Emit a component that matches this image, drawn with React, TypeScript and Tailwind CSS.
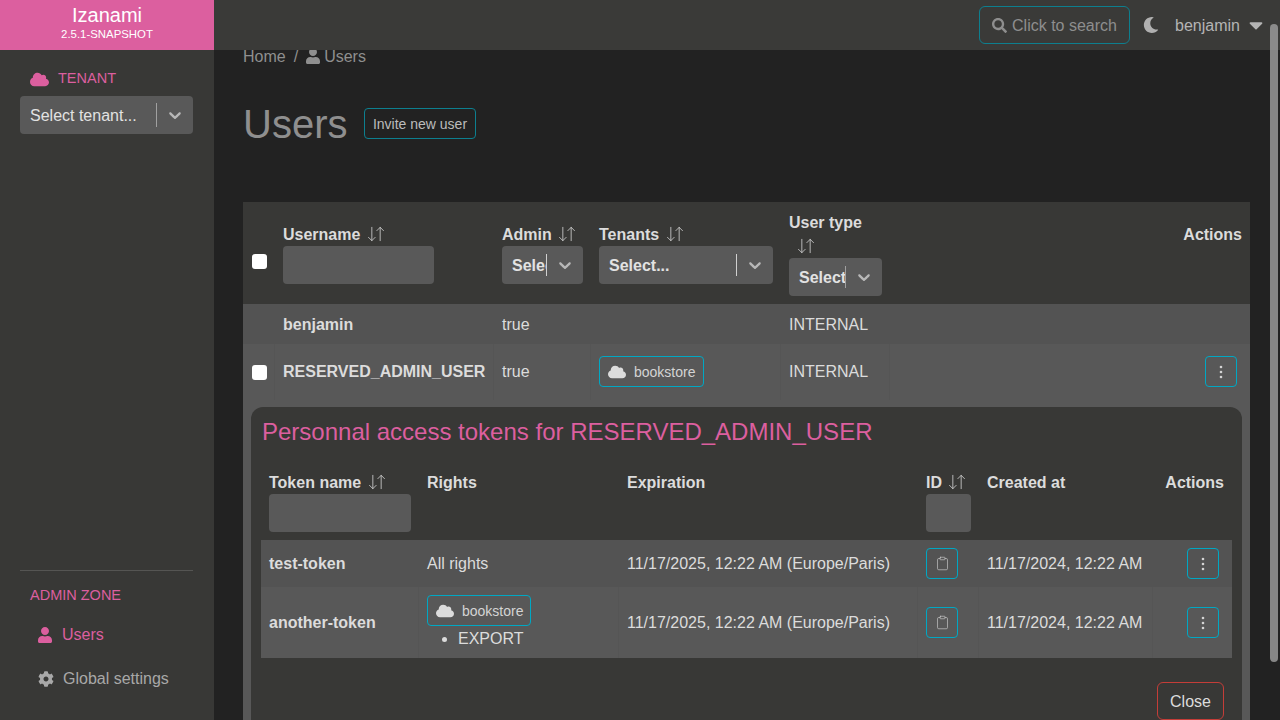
import { ArrowDownUp, Clipboard } from "lucide-react";
import {
  FaCaretDown,
  FaCloud,
  FaCog,
  FaMoon,
  FaSearch,
  FaUser,
} from "react-icons/fa";

const Chevron = () => (
  <svg viewBox="0 0 20 20" className="w-5 h-5 fill-[#b8b8b8] shrink-0">
    <path d="M4.516 7.548c0.436-0.446 1.043-0.481 1.576 0l3.908 3.747 3.908-3.747c0.533-0.481 1.141-0.446 1.574 0 0.436 0.445 0.408 1.197 0 1.615-0.406 0.418-4.695 4.502-4.695 4.502-0.217 0.223-0.502 0.335-0.787 0.335s-0.57-0.112-0.789-0.335c0 0-4.287-4.084-4.695-4.502s-0.436-1.17 0-1.615z" />
  </svg>
);

const Kebab = () => (
  <svg viewBox="0 0 12 14" className="w-3 h-[14px] fill-[#d4d4d4]">
    <circle cx="6" cy="2" r="1.3" />
    <circle cx="6" cy="7" r="1.3" />
    <circle cx="6" cy="12" r="1.3" />
  </svg>
);

const SortIcon = () => (
  <ArrowDownUp size={20} strokeWidth={1} className="inline-block text-[#d0d0d0] ml-px align-[-4px]" />
);

const Select = ({
  label,
  width,
  separator,
}: {
  label: string;
  width: string;
  separator: string;
}) => (
  <div className={`${width} h-[38px] rounded bg-[#595959] flex items-center font-bold`}>
    <div className="flex-1 min-w-0 pl-[10px] pt-[2px] overflow-hidden whitespace-nowrap text-[#e2e2e2]">
      {label}
    </div>
    <div className={`w-px h-[22px] ${separator}`} />
    <div className="w-[36px] flex justify-center">
      <Chevron />
    </div>
  </div>
);

const TenantTag = ({ width }: { width: string }) => (
  <div className={`${width} h-[31px] rounded border border-[#00a8c4] flex items-center pl-2 text-sm text-[#d4d4d4] font-normal`}>
    <FaCloud size={18} className="text-[#dcdcdc]" />
    <span className="ml-2">bookstore</span>
  </div>
);

const IconButton = ({ children }: { children: React.ReactNode }) => (
  <div className="w-[32px] h-[31px] rounded border border-[#00a8c4] flex items-center justify-center text-[#d0d0d0]">
    {children}
  </div>
);

const Sidebar = () => (
  <aside className="w-[214px] shrink-0 bg-[#383836] flex flex-col justify-between pl-5 pr-[21px] pt-[19px] pb-[31px]">
    <div>
      <div className="flex items-center gap-[9px] pl-[10px] h-5 text-[#dc5f9f] text-[14.5px]">
        <FaCloud size={19} />
        <span>TENANT</span>
      </div>
      <div className="mt-[7px] h-[38px] rounded bg-[#595959] flex items-center text-[#e2e2e2]">
        <div className="flex-1 pl-[10px] pt-[2px] whitespace-nowrap">Select tenant...</div>
        <div className="w-px h-[24px] bg-[#a0a0a0]" />
        <div className="w-[36px] flex justify-center">
          <Chevron />
        </div>
      </div>
    </div>
    <div className="border-t border-[#555553] pt-[14px]">
      <div className="pl-[10px] text-[14.5px] leading-5 text-[#dc5f9f]">ADMIN ZONE</div>
      <div className="mt-[20px] pl-[17px] h-5 flex items-center gap-[9px] text-[#dc5f9f]">
        <FaUser size={16} />
        <span>Users</span>
      </div>
      <div className="mt-[24px] pl-[18px] h-5 flex items-center gap-[9px] text-[#a8a8a8]">
        <FaCog size={16} />
        <span>Global settings</span>
      </div>
    </div>
  </aside>
);

const cellLine = "shadow-[inset_-1px_0_0_#555555]";

const TokenPanel = () => (
  <div className="ml-2 mr-2 mt-[7px] rounded-t-xl bg-[#383836] px-[10px] pt-[9px] pb-4">
    <h2 className="text-2xl leading-8 text-[#dc5f9f] pl-px">
      Personnal access tokens for RESERVED_ADMIN_USER
    </h2>
    <table className="table-fixed w-[971px] mt-[14px] text-[#dcdcdc]">
      <colgroup>
        <col className="w-[158px]" />
        <col className="w-[200px]" />
        <col className="w-[299px]" />
        <col className="w-[61px]" />
        <col className="w-[174px]" />
        <col />
      </colgroup>
      <thead>
        <tr className="h-[78px] text-left">
          <th className="px-2 py-2 align-top">
            <div className="h-6 leading-[26px] whitespace-nowrap">
              Token name <SortIcon />
            </div>
            <div className="w-[142px] h-[38px] rounded bg-[#595959]" />
          </th>
          <th className="px-2 py-2 align-top h-6 leading-[26px]">Rights</th>
          <th className="px-2 py-2 align-top h-6 leading-[26px]">Expiration</th>
          <th className="px-2 py-2 align-top">
            <div className="h-6 leading-[26px] whitespace-nowrap">
              ID <SortIcon />
            </div>
            <div className="w-[45px] h-[38px] rounded bg-[#595959]" />
          </th>
          <th className="px-2 py-2 align-top h-6 leading-[26px]">Created at</th>
          <th className="px-2 py-2 align-top h-6 leading-[26px] text-right">Actions</th>
        </tr>
      </thead>
      <tbody>
        <tr className="h-[47px] bg-[#535353]">
          <td className="px-2 font-bold">test-token</td>
          <td className="px-2">All rights</td>
          <td className="px-2 whitespace-nowrap">11/17/2025, 12:22 AM (Europe/Paris)</td>
          <td className="px-2">
            <IconButton>
              <Clipboard size={15} strokeWidth={1} />
            </IconButton>
          </td>
          <td className="px-2 whitespace-nowrap">11/17/2024, 12:22 AM</td>
          <td className="pr-[13px]">
            <div className="flex justify-end">
              <IconButton>
                <Kebab />
              </IconButton>
            </div>
          </td>
        </tr>
        <tr className="h-[71px] bg-[#585858]">
          <td className={`px-2 font-bold ${cellLine}`}>another-token</td>
          <td className={`px-2 pb-px ${cellLine}`}>
            <TenantTag width="w-[104px]" />
            <ul className="list-disc pl-[31px] leading-[20px] mt-[3px]">
              <li>EXPORT</li>
            </ul>
          </td>
          <td className={`px-2 whitespace-nowrap ${cellLine}`}>
            11/17/2025, 12:22 AM (Europe/Paris)
          </td>
          <td className={`px-2 ${cellLine}`}>
            <IconButton>
              <Clipboard size={15} strokeWidth={1} />
            </IconButton>
          </td>
          <td className={`px-2 whitespace-nowrap ${cellLine}`}>11/17/2024, 12:22 AM</td>
          <td className="pr-[13px]">
            <div className="flex justify-end">
              <IconButton>
                <Kebab />
              </IconButton>
            </div>
          </td>
        </tr>
      </tbody>
    </table>
    <div className="flex justify-end mt-6 pr-2">
      <div className="w-[67px] h-[38px] pt-px rounded-md border border-[#c43d38] flex items-center justify-center text-[#dcdcdc]">
        Close
      </div>
    </div>
  </div>
);

const UsersTable = () => (
  <table className="table-fixed w-[1007px] mt-[54px] text-[#dcdcdc]">
    <colgroup>
      <col className="w-[32px]" />
      <col className="w-[219px]" />
      <col className="w-[97px]" />
      <col className="w-[190px]" />
      <col className="w-[109px]" />
      <col />
    </colgroup>
    <thead>
      <tr className="h-[102px] bg-[#383836] text-left">
        <th className="pl-[9px]">
          <input type="checkbox" className="appearance-none block w-[15px] h-[15px] mt-4 bg-white rounded-[3px]" />
        </th>
        <th className="px-2">
          <div className="h-6 leading-[26px] whitespace-nowrap">
            Username <SortIcon />
          </div>
          <div className="w-[151px] h-[38px] rounded bg-[#595959]" />
        </th>
        <th className="px-2">
          <div className="h-6 leading-[26px] whitespace-nowrap">
            Admin <SortIcon />
          </div>
          <Select label="Select..." width="w-[81px]" separator="bg-[#d0d0d0]" />
        </th>
        <th className="px-2">
          <div className="h-6 leading-[26px] whitespace-nowrap">
            Tenants <SortIcon />
          </div>
          <Select label="Select..." width="w-[174px]" separator="bg-[#d0d0d0]" />
        </th>
        <th className="px-2">
          <div className="h-6 leading-[26px] whitespace-nowrap">User type</div>
          <div className="h-6 leading-[26px] pl-[6px]">
            <SortIcon />
          </div>
          <Select label="Select..." width="w-[93px]" separator="bg-[#a0a0a0]" />
        </th>
        <th className="pr-2 text-right pb-[36px]">Actions</th>
      </tr>
    </thead>
    <tbody>
      <tr className="h-[40px] bg-[#535353]">
        <td />
        <td className="px-2 pt-[2px] font-bold">benjamin</td>
        <td className="px-2 pt-[2px]">true</td>
        <td />
        <td className="px-2 pt-[2px]">INTERNAL</td>
        <td />
      </tr>
      <tr className="h-[56px] bg-[#585858]">
        <td className={`pl-[9px] ${cellLine}`}>
          <input type="checkbox" className="appearance-none block w-[15px] h-[15px] bg-white rounded-[3px]" />
        </td>
        <td className={`px-2 font-bold whitespace-nowrap ${cellLine}`}>RESERVED_ADMIN_USER</td>
        <td className={`px-2 ${cellLine}`}>true</td>
        <td className={`px-2 pb-px ${cellLine}`}>
          <TenantTag width="w-[105px]" />
        </td>
        <td className={`px-2 ${cellLine}`}>INTERNAL</td>
        <td className="pr-[13px] pb-px">
          <div className="flex justify-end">
            <IconButton>
              <Kebab />
            </IconButton>
          </div>
        </td>
      </tr>
      <tr className="bg-[#585858]">
        <td colSpan={6}>
          <TokenPanel />
        </td>
      </tr>
    </tbody>
  </table>
);

const App = () => {
  return (
    <div className="relative h-screen w-full overflow-hidden bg-[#222222] font-['Liberation_Sans',Arial,sans-serif] text-base">
      <header className="relative z-10 h-[50px] flex bg-[#3a3a38]">
        <div className="w-[214px] bg-[#dc5f9f] text-white text-center pt-[4px]">
          <div className="text-[20px] leading-[22px]">Izanami</div>
          <div className="text-[11.4px] leading-[16px]">2.5.1-SNAPSHOT</div>
        </div>
        <div className="flex-1 flex items-center justify-end pr-[13px]">
          <div className="w-[151px] h-[38px] pt-px rounded-md border border-[#0d7f8f] flex items-center pl-3 gap-[5px] text-[#8e8e8e]">
            <FaSearch size={15} />
            <span>Click to search</span>
          </div>
          <FaMoon size={16} className="ml-[13px] text-[#b0b0b0]" />
          <span className="ml-[16px] pt-px text-[#b4b4b4]">benjamin</span>
          <FaCaretDown size={22} className="ml-[5px] text-[#b4b4b4]" />
        </div>
      </header>
      <div className="flex h-[670px]">
        <Sidebar />
        <main className="flex-1 min-w-0 pl-[29px] -mt-[6px] overflow-hidden">
          <div className="flex items-center h-6 pt-[2px] text-[#8f8f8f]">
            <span>Home</span>
            <span className="ml-[8px]">/</span>
            <FaUser size={16} className="ml-[7px] -mt-[2px]" />
            <span className="ml-[3px]">Users</span>
          </div>
          <div className="flex items-center mt-8 h-12">
            <h1 className="text-[40px] leading-[48px] text-[#8f8f8f] w-[105px]">Users</h1>
            <div className="ml-[16px] -mt-px w-[112px] h-[31px] rounded border border-[#0d7f8f] flex items-center justify-center text-sm text-[#bcbcbc]">
              Invite new user
            </div>
          </div>
          <UsersTable />
        </main>
      </div>
      <div className="absolute z-20 right-[2px] top-[24px] w-[8px] h-[638px] rounded-full bg-[#a0a0a0]/80" />
    </div>
  );
};

export default App;
